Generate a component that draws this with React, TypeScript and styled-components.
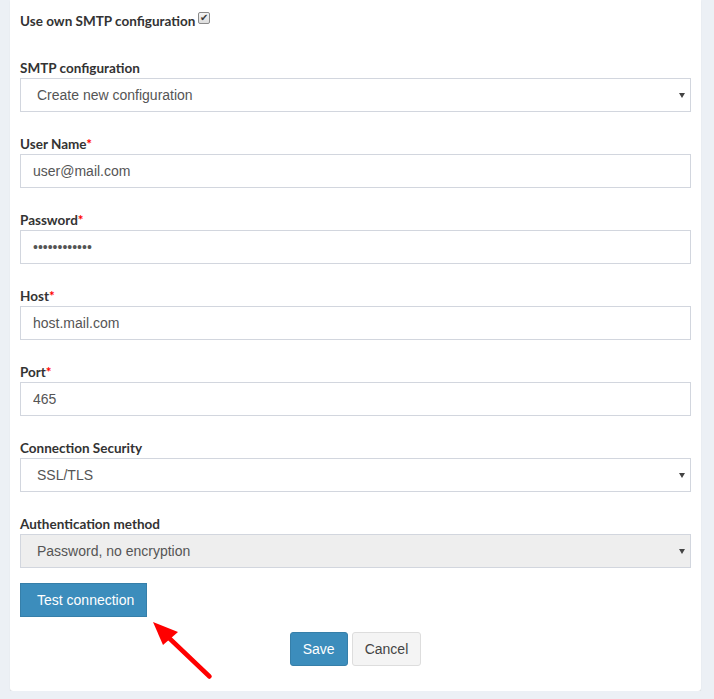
import styled, { createGlobalStyle } from 'styled-components';

const GlobalStyle = createGlobalStyle`
  body {
    margin: 0;
    background: #ecf0f5;
    font-family: "Liberation Sans", Arial, sans-serif;
  }
`;

const FIELDS = [
  { label: 'User Name', value: 'user@mail.com', type: 'text' },
  { label: 'Password', value: '123456789012', type: 'password' },
  { label: 'Host', value: 'host.mail.com', type: 'text' },
  { label: 'Port', value: '465', type: 'text' },
];

const Arrow = () => (
  <ArrowSvg width="80" height="80" viewBox="0 0 80 80">
    <line x1="18" y1="27" x2="59.5" y2="66.5" stroke="#f00" strokeWidth="4.5" strokeLinecap="round" />
    <polygon points="3,12 28,22 13,35" fill="#f00" />
  </ArrowSvg>
);

const App = () => {
  return (
    <>
      <GlobalStyle />
      <Panel>
        <CheckRow>
          Use own SMTP configuration
          <CheckBox role="checkbox" aria-checked="true">
            ✔
          </CheckBox>
        </CheckRow>
        <Fields>
          <Group>
            <Label>SMTP configuration</Label>
            <SelectWrap>
              <Select defaultValue="new">
                <option value="new">Create new configuration</option>
              </Select>
            </SelectWrap>
          </Group>
          {FIELDS.map((field) => (
            <Group key={field.label}>
              <Label>
                {field.label}
                <Required>*</Required>
              </Label>
              <Input type={field.type} defaultValue={field.value} readOnly />
            </Group>
          ))}
          <Group>
            <Label>Connection Security</Label>
            <SelectWrap>
              <Select defaultValue="ssl">
                <option value="ssl">SSL/TLS</option>
              </Select>
            </SelectWrap>
          </Group>
          <Group>
            <Label>Authentication method</Label>
            <SelectWrap>
              <Select defaultValue="pw" disabled>
                <option value="pw">Password, no encryption</option>
              </Select>
            </SelectWrap>
          </Group>
        </Fields>
        <TestButton type="button">Test connection</TestButton>
        <ButtonRow>
          <Button type="button" $primary>
            Save
          </Button>
          <Button type="button">Cancel</Button>
        </ButtonRow>
        <Arrow />
      </Panel>
    </>
  );
};

export default App;

const Panel = styled.div`
  position: relative;
  box-sizing: border-box;
  width: 691px;
  margin-left: 10px;
  padding: 10px 10px 25px 10px;

  background: #fff;
  border-radius: 0 0 3px 3px;
  box-shadow: 0 1px 1px rgba(0, 0, 0, 0.12);
`;

const CheckRow = styled.div`
  display: flex;
  align-items: center;
  height: 20px;
  padding-top: 1px;

  color: #333;
  font-family: Lato, "Open Sans", sans-serif;
  font-size: 13.5px;
  font-weight: 700;
`;

const CheckBox = styled.span`
  display: flex;
  align-items: center;
  justify-content: center;
  box-sizing: border-box;
  width: 12px;
  height: 12px;
  margin: -7px 0 0 3px;

  color: #3a3a3a;
  font-family: "DejaVu Sans", sans-serif;
  font-size: 10px;
  font-weight: 700;
  line-height: 1;
  background: linear-gradient(#f4f4f4, #ddd);
  border: 1px solid #8a8a8a;
  border-radius: 2px;
`;

const Fields = styled.div`
  display: flex;
  flex-direction: column;
  gap: 21px;
  margin-top: 26px;
`;

const Group = styled.div`
  display: flex;
  flex-direction: column;
`;

const Label = styled.label`
  display: block;
  padding-top: 1px;

  color: #333;
  font-family: Lato, "Open Sans", sans-serif;
  font-size: 13.5px;
  font-weight: 700;
  line-height: 20px;
`;

const Required = styled.span`
  color: #f00;
`;

const fieldBase = `
  box-sizing: border-box;
  width: 100%;
  height: 34px;
  margin: 0;

  color: #555;
  font-family: "Liberation Sans", Arial, sans-serif;
  font-size: 14px;
  background: #fff;
  border: 1px solid #d2d6de;
  border-radius: 0;
  outline: none;
`;

const Input = styled.input`
  ${fieldBase}
  padding: 6px 12px;
`;

const SelectWrap = styled.div`
  position: relative;

  &::after {
    content: '';
    position: absolute;
    top: 15px;
    right: 6px;
    border-top: 5px solid #444;
    border-left: 3.5px solid transparent;
    border-right: 3.5px solid transparent;
    pointer-events: none;
  }
`;

const Select = styled.select`
  ${fieldBase}
  padding: 6px 12px 6px 16px;
  appearance: none;

  &:disabled {
    color: #555;
    background: #eee;
    opacity: 1;
  }
`;

const TestButton = styled.button`
  display: block;
  width: 127px;
  height: 34px;
  margin-top: 15px;
  padding: 0 0 0 16px;

  color: #fff;
  font-family: "Liberation Sans", Arial, sans-serif;
  font-size: 14px;
  text-align: left;
  background: #3c8dbc;
  border: 1px solid #367fa9;
  border-radius: 0;
`;

const ButtonRow = styled.div`
  display: flex;
  gap: 4px;
  justify-content: center;
  margin-top: 15px;
`;

const Button = styled.button<{ $primary?: boolean }>`
  height: 34px;
  padding: 0 12px;

  color: ${({ $primary }) => ($primary ? '#fff' : '#444')};
  font-family: "Liberation Sans", Arial, sans-serif;
  font-size: 14px;
  background: ${({ $primary }) => ($primary ? '#3c8dbc' : '#f4f4f4')};
  border: 1px solid ${({ $primary }) => ($primary ? '#367fa9' : '#ddd')};
  border-radius: 3px;
`;

const ArrowSvg = styled.svg`
  position: absolute;
  left: 140px;
  top: 610px;
`;
